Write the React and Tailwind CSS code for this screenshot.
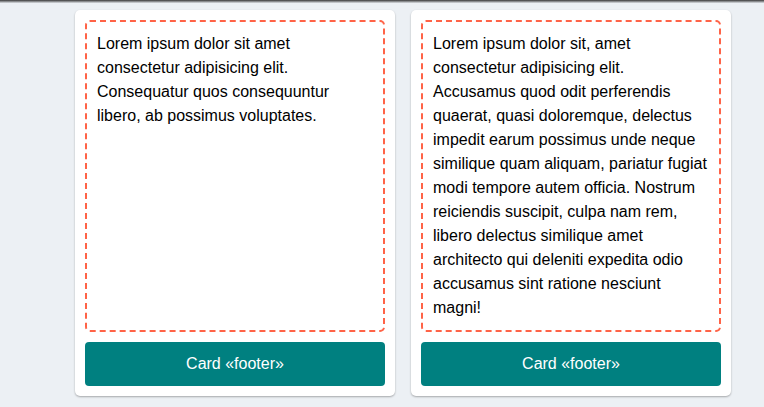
export default function App() {
  const font = { fontFamily: '"Liberation Sans", Arial, sans-serif' };
  const cards = [
    "Lorem ipsum dolor sit amet consectetur adipisicing elit. Consequatur quos consequuntur libero, ab possimus voluptates.",
    "Lorem ipsum dolor sit, amet consectetur adipisicing elit. Accusamus quod odit perferendis quaerat, quasi doloremque, delectus impedit earum possimus unde neque similique quam aliquam, pariatur fugiat modi tempore autem officia. Nostrum reiciendis suscipit, culpa nam rem, libero delectus similique amet architecto qui deleniti expedita odio accusamus sint ratione nesciunt magni!",
  ];
  return (
    <div className="w-[764px] h-[407px] bg-[#ecf0f4] overflow-hidden flex flex-col" style={font}>
      <div className="h-[3px] shrink-0 bg-gradient-to-b from-[#3a3a3a] via-[#8a8c8e] to-[#dde1e5]" />
      <div className="flex gap-4 pl-[75px] pt-[7px]">
        {cards.map((t, i) => (
          <div
            key={i}
            className="w-[320px] bg-white rounded-[5px] shadow-[0_1px_2px_rgba(0,0,0,0.3)] p-[10px] flex flex-col gap-[10px]"
          >
            <div className="flex-1 border-2 border-dashed border-[#ff6347] rounded-[5px] p-[10px] text-[16px] leading-[24px] text-black">
              {t}
            </div>
            <button className="h-[44px] w-full rounded-[4px] bg-[#008080] text-white text-[16px]">
              Card «footer»
            </button>
          </div>
        ))}
      </div>
    </div>
  );
}
